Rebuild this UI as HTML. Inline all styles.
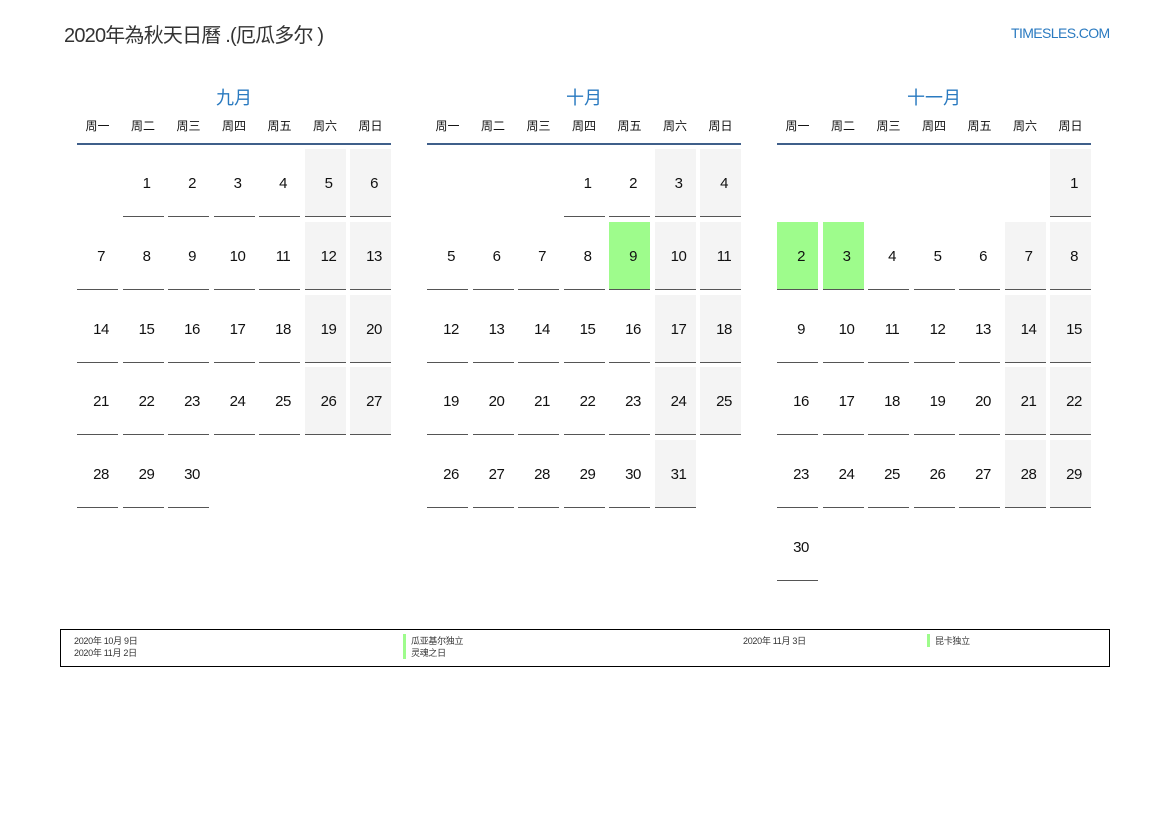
<!DOCTYPE html>
<html><head><meta charset="utf-8"><style>
body{margin:0;width:1169px;height:827px;background:#fff;font-family:"Liberation Sans","Noto Sans CJK SC",sans-serif;position:relative;overflow:hidden}
.title{position:absolute;left:64px;top:19px;font-size:20px;color:#333;letter-spacing:-0.8px}
.site{position:absolute;left:1011px;top:25px;font-size:14px;color:#2a7ac0;letter-spacing:-0.6px}
.m{position:absolute;top:84px;width:314px}
.mt{text-align:center;color:#2a7ac0;font-size:18px;height:24px}
.wd{display:grid;grid-template-columns:repeat(7,41px);column-gap:4.5px;font-size:12px;text-align:center;margin-top:9px;height:22px;color:#111}
.hl{height:2px;background:#3f5f8a;margin-top:4px}
.g{display:grid;grid-template-columns:repeat(7,41px);column-gap:4.5px;grid-auto-rows:68px;row-gap:4.8px;margin-top:4px}
.g div{box-sizing:border-box;border-bottom:1.5px solid #555;display:flex;align-items:center;justify-content:center;font-size:15px;color:#111;padding-top:2px;padding-left:7px;letter-spacing:-0.5px}
.g div.e{border:none}
.g div.w{background:#f4f4f4}
.g div.h{background:#9efc8c}
.leg{position:absolute;left:60px;top:629px;width:1048px;height:36px;border:1px solid #000;font-size:9px;color:#333;letter-spacing:-0.3px}
.leg span{position:absolute}
.bar{border-left:3px solid #9efc8c;padding-left:5px}
</style></head><body>
<div class="title">2020年為秋天日曆 .(厄瓜多尔 )</div>
<div class="site">TIMESLES.COM</div>

<div class="m" style="left:77px">
<div class="mt">九月</div>
<div class="wd"><span>周一</span><span>周二</span><span>周三</span><span>周四</span><span>周五</span><span>周六</span><span>周日</span></div>
<div class="hl"></div>
<div class="g">
<div class="e"></div><div>1</div><div>2</div><div>3</div><div>4</div><div class="w">5</div><div class="w">6</div>
<div>7</div><div>8</div><div>9</div><div>10</div><div>11</div><div class="w">12</div><div class="w">13</div>
<div>14</div><div>15</div><div>16</div><div>17</div><div>18</div><div class="w">19</div><div class="w">20</div>
<div>21</div><div>22</div><div>23</div><div>24</div><div>25</div><div class="w">26</div><div class="w">27</div>
<div>28</div><div>29</div><div>30</div>
</div></div>

<div class="m" style="left:427px">
<div class="mt">十月</div>
<div class="wd"><span>周一</span><span>周二</span><span>周三</span><span>周四</span><span>周五</span><span>周六</span><span>周日</span></div>
<div class="hl"></div>
<div class="g">
<div class="e"></div><div class="e"></div><div class="e"></div><div>1</div><div>2</div><div class="w">3</div><div class="w">4</div>
<div>5</div><div>6</div><div>7</div><div>8</div><div class="h">9</div><div class="w">10</div><div class="w">11</div>
<div>12</div><div>13</div><div>14</div><div>15</div><div>16</div><div class="w">17</div><div class="w">18</div>
<div>19</div><div>20</div><div>21</div><div>22</div><div>23</div><div class="w">24</div><div class="w">25</div>
<div>26</div><div>27</div><div>28</div><div>29</div><div>30</div><div class="w">31</div>
</div></div>

<div class="m" style="left:777px">
<div class="mt">十一月</div>
<div class="wd"><span>周一</span><span>周二</span><span>周三</span><span>周四</span><span>周五</span><span>周六</span><span>周日</span></div>
<div class="hl"></div>
<div class="g">
<div class="e"></div><div class="e"></div><div class="e"></div><div class="e"></div><div class="e"></div><div class="e"></div><div class="w">1</div>
<div class="h">2</div><div class="h">3</div><div>4</div><div>5</div><div>6</div><div class="w">7</div><div class="w">8</div>
<div>9</div><div>10</div><div>11</div><div>12</div><div>13</div><div class="w">14</div><div class="w">15</div>
<div>16</div><div>17</div><div>18</div><div>19</div><div>20</div><div class="w">21</div><div class="w">22</div>
<div>23</div><div>24</div><div>25</div><div>26</div><div>27</div><div class="w">28</div><div class="w">29</div>
<div>30</div>
</div></div>

<div class="leg">
<span style="left:13px;top:4px">2020年 10月 9日</span>
<span style="left:13px;top:16px">2020年 11月 2日</span>
<span class="bar" style="left:342px;top:4px">瓜亚基尔独立</span>
<span class="bar" style="left:342px;top:16px">灵魂之日</span>
<span style="left:682px;top:4px">2020年 11月 3日</span>
<span class="bar" style="left:866px;top:4px">昆卡独立</span>
</div>
</body></html>
